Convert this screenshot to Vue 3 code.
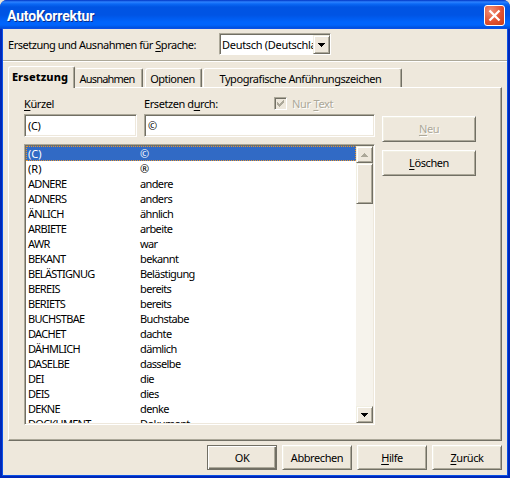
<script setup>
import { ref } from 'vue'

const tabs = [
  { label: 'Ersetzung', cls: 'active' },
  { label: 'Ausnahmen', cls: 'exceptions' },
  { label: 'Optionen', cls: 'options' },
  { label: 'Typografische Anführungszeichen', cls: 'quotes' },
]
const selected = ref(0)
const entries = [
  ['(C)', '©'],
  ['(R)', '®'],
  ['ADNERE', 'andere'],
  ['ADNERS', 'anders'],
  ['ÄNLICH', 'ähnlich'],
  ['ARBIETE', 'arbeite'],
  ['AWR', 'war'],
  ['BEKANT', 'bekannt'],
  ['BELÄSTIGNUG', 'Belästigung'],
  ['BEREIS', 'bereits'],
  ['BERIETS', 'bereits'],
  ['BUCHSTBAE', 'Buchstabe'],
  ['DACHET', 'dachte'],
  ['DÄHMLICH', 'dämlich'],
  ['DASELBE', 'dasselbe'],
  ['DEI', 'die'],
  ['DEIS', 'dies'],
  ['DEKNE', 'denke'],
  ['DOCKUMENT', 'Dokument'],
]
</script>

<template>
  <div class="window">
    <header class="titlebar">
      <span class="title">AutoKorrektur</span>
      <button class="close" aria-label="Schließen">
        <svg width="19" height="19" viewBox="0 0 19 19">
          <path d="M4.5 4.5L14.5 14.5M14.5 4.5L4.5 14.5" stroke="#fff" stroke-width="2.3" />
        </svg>
      </button>
    </header>
    <main class="body">
      <div class="language">
        <label class="lang-label">Ersetzung und Ausnahmen für <u>S</u>prache:</label>
        <div class="combo">
          <span class="combo-text">Deutsch (Deutschla</span>
          <span class="combo-btn">
            <svg width="7" height="4" viewBox="0 0 7 4" shape-rendering="crispEdges"><path d="M0 0H7V1H6V2H5V3H4V4H3V3H2V2H1V1H0Z" /></svg>
          </span>
        </div>
      </div>

      <nav class="tabs">
        <div v-for="t in tabs" :key="t.label" class="tab" :class="t.cls"><span>{{ t.label }}</span></div>
      </nav>

      <section class="panel">
        <div class="labels">
          <label class="l-short"><u>K</u>ürzel</label>
          <label class="l-by">Ersetzen d<u>u</u>rch:</label>
          <span class="check">
            <svg width="7" height="7" viewBox="0 0 7 7" shape-rendering="crispEdges"><path d="M0 2H1V3H2V4H3V3H4V2H5V1H6V0H7V3H6V4H5V5H4V6H3V7H2V6H1V5H0Z" fill="#aca899" /></svg>
          </span>
          <span class="disabled l-only">Nur <u>T</u>ext</span>
        </div>
        <div class="columns">
          <div class="left">
            <div class="inputs">
              <div class="field f-short">(C)</div>
              <div class="field f-by">©</div>
            </div>
            <div class="list">
              <div class="rows">
                <div v-for="(e, i) in entries" :key="e[0]" class="row" :class="{ selected: i === selected }">
                  <span class="key">{{ e[0] }}</span><span class="val">{{ e[1] }}</span>
                </div>
              </div>
              <div class="scroll">
                <span class="sbtn">
                  <svg width="7" height="4" viewBox="0 0 7 4" shape-rendering="crispEdges"><path d="M3 0H4V1H5V2H6V3H7V4H0V3H1V2H2V1H3Z" fill="#aca899" /></svg>
                </span>
                <span class="thumb"></span>
                <span class="track"></span>
                <span class="sbtn">
                  <svg width="7" height="4" viewBox="0 0 7 4" shape-rendering="crispEdges"><path d="M0 0H7V1H6V2H5V3H4V4H3V3H2V2H1V1H0Z" /></svg>
                </span>
              </div>
            </div>
          </div>
          <div class="side">
            <button class="btn disabled b-new"><span><u>N</u>eu</span></button>
            <button class="btn b-del"><span><u>L</u>öschen</span></button>
          </div>
        </div>
      </section>

      <footer class="actions">
        <button class="btn default"><span>OK</span></button>
        <button class="btn b-cancel"><span>Abbrechen</span></button>
        <button class="btn b-help"><span><u>H</u>ilfe</span></button>
        <button class="btn b-back"><span><u>Z</u>urück</span></button>
      </footer>
    </main>
  </div>
</template>

<style>
body { margin: 0; background: #e8e4d8; overflow: hidden; }
</style>

<style scoped>
* { box-sizing: border-box; }
.window {
  width: 510px; height: 478px; display: flex; flex-direction: column;
  font: 11px/15px "Noto Sans", "Open Sans", sans-serif; color: #000; letter-spacing: -0.42px;
  background: #0028b8; border-radius: 7px 7px 0 0; overflow: hidden;
  white-space: nowrap;
}
u { text-decoration-thickness: 1px; text-underline-offset: 2px; text-decoration-skip-ink: none; }
.titlebar {
  height: 29px; flex: none; display: flex; justify-content: space-between; align-items: center;
  padding: 2px 5px 0 7px;
  background: linear-gradient(#0034c4 0, #2c82ff 2px, #0a68f4 4px, #0054e3 7px, #0054e4 15px, #0064fc 22px, #0064fc 25px, #0048d0 29px);
}
.title {
  font: bold 14px/18px Roboto, "Noto Sans", sans-serif; color: #fff; text-shadow: 1px 1px 0 #0a2d8c;
  letter-spacing: -0.15px;
}
.close {
  width: 21px; height: 21px; padding: 0; border: 1px solid #fff; border-radius: 3px;
  background: radial-gradient(circle at 30% 25%, #f09078, #e25232 55%, #c83c14);
  display: flex; align-items: center; justify-content: center;
}
.close svg { flex: none; }
.body {
  flex: 1; margin: 0 3px 3px; padding: 0 5px 5px; display: flex; flex-direction: column;
  background: #eee8dc; box-shadow: 0 0 0 1px #0a50e6;
}
.language {
  height: 33px; flex: none; margin: 0 -5px; padding: 4px 0 0 5px; display: flex; align-items: flex-start;
  border-bottom: 1px solid #fff; box-shadow: inset 0 -1px #aca899;
}
.lang-label { width: 211px; padding-top: 4px; letter-spacing: -0.48px; }
.combo {
  width: 112px; height: 22px; display: flex; background: #fff;
  border: 1px solid; border-color: #aca899 #fff #fff #aca899; box-shadow: inset 1px 1px #716f64;
  padding: 1px 0 0 2px;
}
.combo-text { flex: 1; min-width: 0; overflow: hidden; padding-top: 2px; letter-spacing: -0.3px; }
.combo-btn, .sbtn, .thumb {
  background: #eee8dc; border: 1px solid; border-color: #f1efe2 #716f64 #716f64 #f1efe2;
  box-shadow: inset 1px 1px #fff, inset -1px -1px #aca899;
  display: flex; align-items: center; justify-content: center; flex: none;
}
.combo-btn { width: 17px; height: 19px; }
.tabs { height: 25px; flex: none; display: flex; align-items: flex-end; padding-top: 4px; position: relative; }
.tab {
  height: 19px; display: flex; justify-content: center; align-items: center;
  border: 1px solid; border-color: #fff #716f64 transparent #fff; border-bottom: 0;
  border-radius: 3px 2px 0 0; box-shadow: inset -1px 0 #aca899;
}
.active { width: 67px; height: 22px; margin-bottom: -1px; font-weight: 800; background: #eee8dc; padding: 0 3px 2px 0; z-index: 1; }
.active span { letter-spacing: 0.1px; }
.exceptions { width: 68px; border-left-color: transparent; padding-right: 4px; letter-spacing: -0.8px; }
.options { width: 57px; margin-left: 2px; padding-right: 2px; letter-spacing: -0.5px; }
.quotes { width: 199px; margin-left: 1px; padding-right: 4px; letter-spacing: -0.45px; }
.panel {
  height: 354px; flex: none; width: 494px; padding: 9px 15px 0;
  border: 1px solid; border-color: #fff #716f64 #716f64 #fff; box-shadow: inset -1px -1px #aca899;
}
.labels { display: flex; height: 17px; }
.labels label, .labels .l-only { line-height: 14px; }
.l-short { width: 120px; }
.l-by { width: 130px; }
.check {
  width: 13px; height: 13px; display: flex; align-items: center; justify-content: center;
  border: 1px solid; border-color: #aca899 #fff #fff #aca899; box-shadow: inset 1px 1px #716f64;
}
.l-only { margin-left: 5px; letter-spacing: -0.3px; }
.disabled { color: #aca899; text-shadow: 1px 1px #fff; }
.columns { display: flex; gap: 7px; }
.left { width: 351px; }
.inputs { display: flex; gap: 7px; margin-bottom: 7px; }
.field {
  height: 23px; background: #fff; padding: 3px 0 0 3px;
  border: 1px solid; border-color: #aca899 #fff #fff #aca899;
  box-shadow: inset 1px 1px #716f64, inset -1px -1px #eee8dc;
}
.f-short { width: 113px; }
.f-by { width: 231px; }
.list {
  height: 281px; display: flex; background: #fff; padding: 1px;
  border: 1px solid; border-color: #aca899 #fff #fff #aca899;
  box-shadow: inset 1px 1px #716f64, inset -1px -1px #eee8dc;
}
.rows { flex: 1; height: 277px; overflow: hidden; }
.row { height: 15px; display: flex; padding-left: 2px; }
.row.selected { background: #316ac5; color: #fff; outline: 1px dotted #e8962e; outline-offset: -1px; }
.key { width: 112px; letter-spacing: -0.7px; }
.val { letter-spacing: -0.62px; }
.row:nth-child(-n+2) .key { letter-spacing: 0; }
.scroll { width: 17px; display: flex; flex-direction: column; background: #f6f3ec; }
.sbtn { height: 17px; }
.thumb { height: 41px; }
.track { flex: 1; }
.side { display: flex; flex-direction: column; gap: 8px; padding-top: 2px; }
.btn {
  font: inherit; letter-spacing: inherit; color: #000; padding: 0 0 1px; background: #eee8dc; height: 25px; width: 70px;
  border: 1px solid; border-color: #fff #716f64 #716f64 #fff;
  box-shadow: inset 1px 1px #f1efe2, inset -1px -1px #aca899;
}
.side .btn { width: 94px; height: 26px; }
.btn.disabled { color: #aca899; }
.actions { display: flex; justify-content: flex-end; gap: 5px; margin-top: 4px; }
.default { border: 1px solid #716f64; box-shadow: inset 1px 1px #fff, inset -1px -1px #716f64, inset -2px -2px #aca899; }
</style>
